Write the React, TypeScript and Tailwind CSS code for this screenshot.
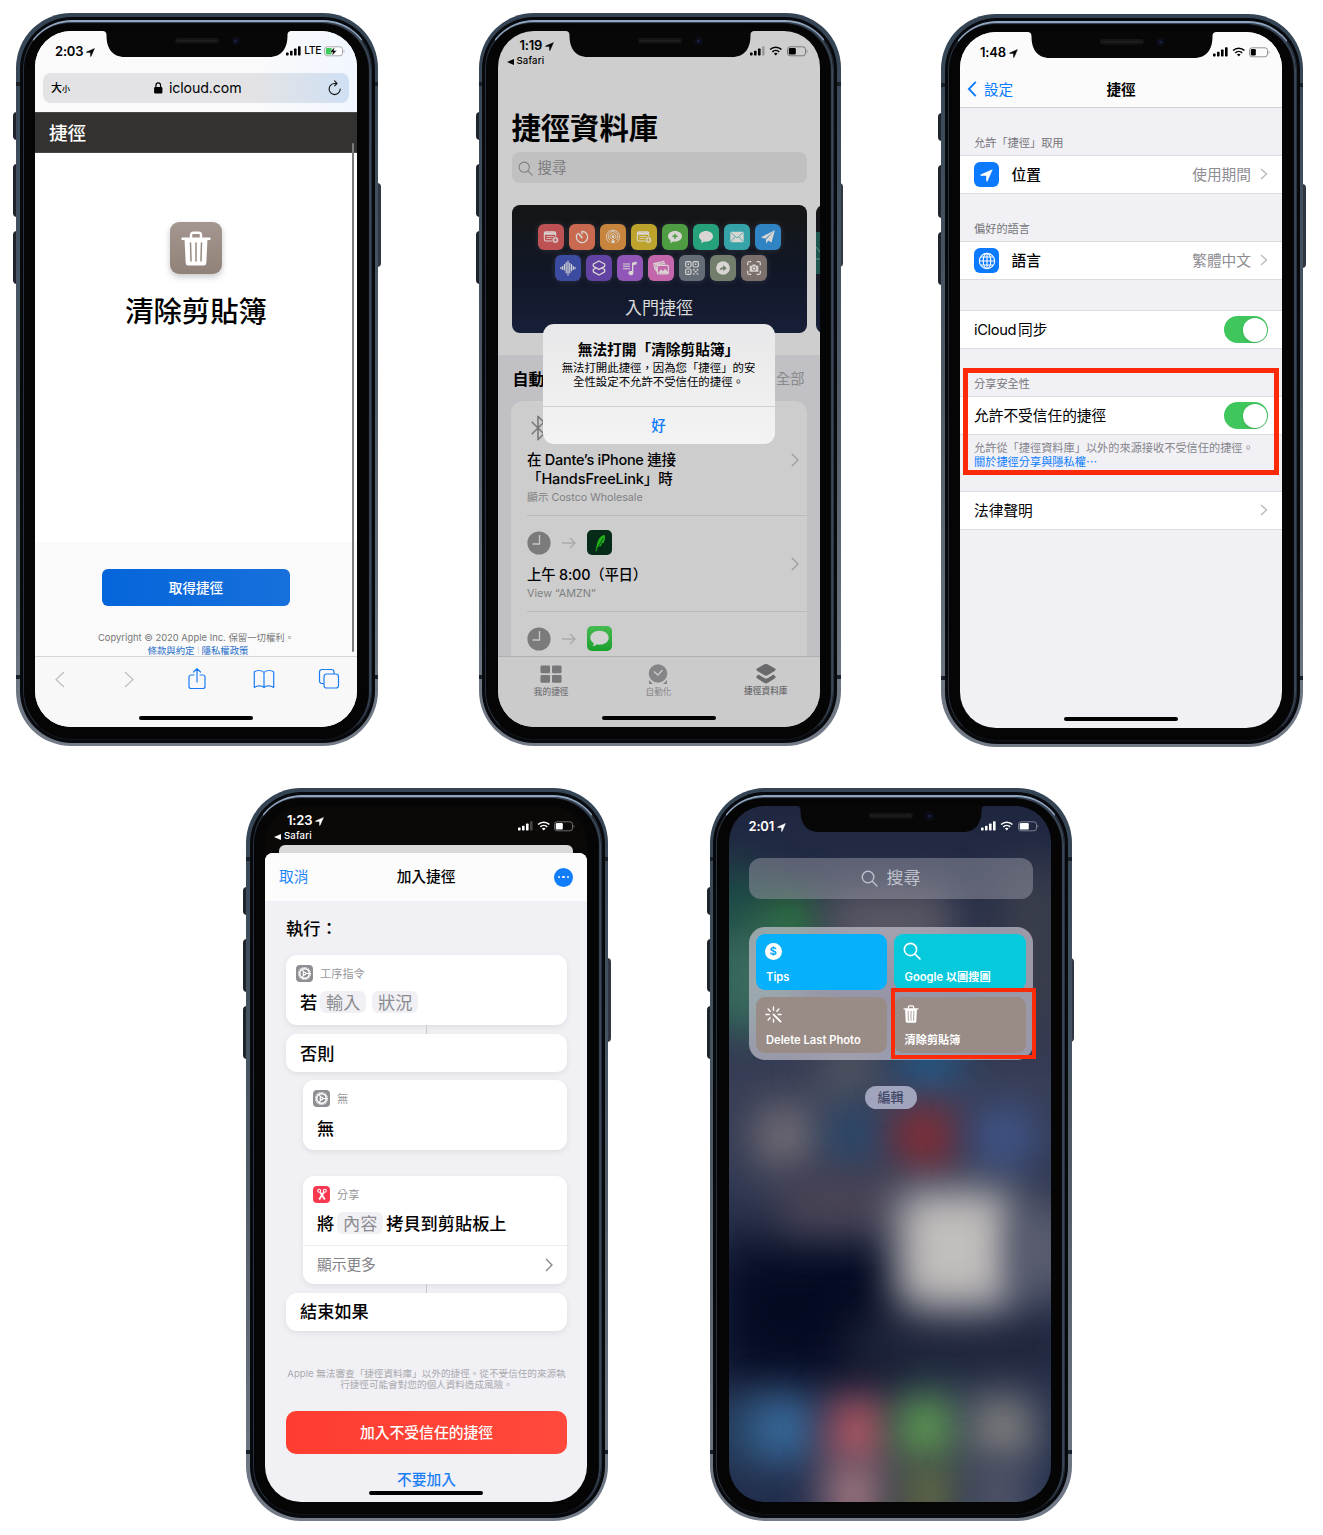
import React from 'react';
import { LuBluetooth } from 'react-icons/lu';

type IconProps = { className?: string };

const LocationArrow = ({ className = '' }: IconProps) => (
  <svg viewBox="0 0 24 24" className={className} fill="currentColor" stroke="currentColor" strokeWidth="1.200" strokeLinejoin="round">
    <path d="M22.500 1.500 1.500 10.700c-.6.3-.5 1 .2 1.100H12l.2 10.400c0 .7.800.9 1.100.2z" />
  </svg>
);

const Signal = ({ dim = false }: { dim?: boolean }) => (
  <svg viewBox="0 0 15 10" className="h-[10px] w-[15px]" fill="currentColor">
    <rect x="0" y="6.500" width="2.600" height="3" rx=".7" />
    <rect x="4" y="4.800" width="2.600" height="4.700" rx=".7" />
    <rect x="8" y="2.600" width="2.600" height="6.900" rx=".7" />
    <rect x="12" y="0.300" width="2.600" height="9.200" rx=".7" opacity={dim ? 0.25 : 1} />
  </svg>
);

const Wifi = () => (
  <svg viewBox="0 0 16 12" className="h-[10px] w-[13.500px]" fill="none" stroke="currentColor" strokeWidth="2">
    <path d="M1.200 4.200a9.800 9.800 0 0 1 13.600 0" />
    <path d="M3.900 7a6 6 0 0 1 8.200 0" />
    <path d="M5.800 9.100a3.200 3.200 0 0 1 4.400 0L8 11.300z" fill="currentColor" stroke="none" />
  </svg>
);

const Battery = ({ level }: { level: number }) => (
  <svg viewBox="0 0 21 11" className="h-[11px] w-[21px]">
    <rect x=".5" y=".8" width="18" height="9" rx="2.600" fill="none" stroke="currentColor" strokeOpacity=".4" />
    <path d="M19.600 3.700c1.200.4 1.200 2.800 0 3.200z" fill="currentColor" opacity=".4" />
    <rect x="1.800" y="2.100" width={level} height="6.400" rx="1.200" fill="currentColor" />
  </svg>
);

const ChargingBattery = () => (
  <svg viewBox="0 0 21 11" className="h-[11px] w-[21px]">
    <rect x=".5" y=".8" width="18" height="9" rx="2.600" fill="#fff" stroke="#a9a9ab" />
    <path d="M19.600 3.700c1.200.4 1.200 2.800 0 3.200z" fill="#a9a9ab" />
    <rect x="1.800" y="2.100" width="6" height="6.400" rx="1" fill="#3ccb5a" />
    <path d="M10.800.8 5.700 6.200h3.100l-1 3.900 5.100-5.500H9.800z" fill="#000" stroke="#fff" strokeWidth=".5" />
  </svg>
);

const Trash = ({ className = '' }: IconProps) => (
  <svg viewBox="0 0 30 35" className={className}>
    <path d="M10 7V4a2.300 2.300 0 0 1 2.300-2.300h5.400A2.300 2.300 0 0 1 20 4v3" fill="none" stroke="#fff" strokeWidth="2.400" />
    <path d="M1 6.500h28c.8 0 .8 2.400 0 2.400H1c-.8 0-.8-2.400 0-2.400z" fill="#fff" />
    <path d="M3.500 8h23l-1.200 24a2.600 2.600 0 0 1-2.600 2.500H7.300A2.600 2.600 0 0 1 4.700 32z" fill="#fff" />
    <path d="m9.500 12 .5 18M15 12v18M20.500 12l-.5 18" stroke="#96897f" strokeWidth="1.500" strokeLinecap="round" />
  </svg>
);

const SearchIcon = ({ className = '', w = 1.6 }: IconProps & { w?: number }) => (
  <svg viewBox="0 0 20 20" className={className} fill="none" stroke="currentColor" strokeWidth={w} strokeLinecap="round">
    <circle cx="8.300" cy="8.300" r="6.800" />
    <path d="m13.300 13.300 5.500 5.500" />
  </svg>
);

const Gear = () => (
  <div className="flex size-[17px] items-center justify-center rounded-[4px] bg-[#8e8e93]">
    <svg viewBox="0 0 24 24" className="size-[15px]" fill="none" stroke="#fff">
      <circle cx="12" cy="12" r="9.500" strokeWidth="1.800" strokeDasharray="1.500 .98" />
      <circle cx="12" cy="12" r="7.600" strokeWidth="2.400" />
      <circle cx="12" cy="12" r="2.200" strokeWidth="2" />
      <path d="M14 12h6M11 10.300 8 5M11 13.700 8 19" strokeWidth="1.800" />
    </svg>
  </div>
);

type StatusProps = { time: string; back?: boolean; dim?: boolean; level?: number; charging?: boolean; className?: string };

const StatusBar = ({ time, back, dim, level = 7, charging, className = '' }: StatusProps) => (
  <div className={`flex h-[42px] shrink-0 justify-between pr-[12px] ${className}`}>
    <div className={back ? 'flex w-20 flex-col pt-[7px]' : 'flex w-20 flex-col pt-[13px]'}>
      <div className={`flex h-[16px] items-center gap-[3px] text-[13px] font-semibold tracking-[-0.200px] ${back ? 'pl-[22px]' : 'pl-[20px]'}`}>
        {time}
        <LocationArrow className="size-[9px]" />
      </div>
      {back && (
        <div className="flex h-[15px] items-center gap-[3px] pl-[9px] text-[9.500px] font-medium tracking-[0.200px]">
          <svg viewBox="0 0 7 6" className="h-[6px] w-[7px]" fill="currentColor"><path d="M7 0v6L0 3z" /></svg>
          Safari
        </div>
      )}
    </div>
    <div className="flex h-[40px] items-center gap-[4px]">
      <Signal dim={dim} />
      {charging ? <span className="-mx-[1px] text-[10.500px] font-medium tracking-[-0.500px]">LTE</span> : <Wifi />}
      {charging ? <ChargingBattery /> : <Battery level={level} />}
    </div>
  </div>
);

const Notch = () => (
  <svg viewBox="0 0 190 28" className="absolute top-[-1px] left-[67px] h-[28px] w-[190px]">
    <path d="M0 0h190v1c-3 0-4.500 1-4.500 4.500C185.500 18 180 27 167 27H23C10 27 4.500 18 4.500 5.500 4.500 2 3 1 0 1z" fill="#080707" />
    <rect x="73" y="8" width="44" height="5.500" rx="2.700" fill="#161515" />
    <path d="M75 10.700h40" stroke="#282726" strokeWidth="1.500" strokeDasharray="1 1" />
    <circle cx="133.500" cy="11" r="4.500" fill="#0b0c16" />
    <circle cx="133.500" cy="11" r="1.600" fill="#182046" />
  </svg>
);

const HomeBar = () => <div className="absolute bottom-[7px] left-[104px] h-[4.500px] w-[114px] rounded-full bg-black" />;

type PhoneProps = { children: React.ReactNode; screen: string; notch?: boolean; home?: boolean };

const Phone = ({ children, screen, notch = true, home = true }: PhoneProps) => (
  <div className="relative h-[733px] w-[362px] shrink-0">
    <div className="absolute top-[99px] left-[-3px] h-[28px] w-[4px] rounded-l-sm bg-[#1d242c]" />
    <div className="absolute top-[151px] left-[-3px] h-[53px] w-[4px] rounded-l-sm bg-[#1d242c]" />
    <div className="absolute top-[218px] left-[-3px] h-[53px] w-[4px] rounded-l-sm bg-[#1d242c]" />
    <div className="absolute top-[170px] right-[-2.500px] h-[84px] w-[4px] rounded-r-sm bg-[#303743]" />
    <div className="relative h-full rounded-[55px] bg-linear-to-b from-[#344454] via-[#4e5a66] to-[#737b88] p-[3.500px]">
      <div className="absolute top-[69px] left-0 h-[4px] w-full bg-[#1a2028]" />
      <div className="absolute bottom-[67px] left-0 h-[4px] w-full bg-[#1a2028]" />
      <div className="relative h-full rounded-[52px] bg-[#07090d] p-[3px]">
        <div className="h-full rounded-[49px] border-x border-t-2 border-b border-x-[#27313d] border-t-[#8fa5c0] border-b-[#11151b] bg-[#050505] pt-[9.500px] pr-[13.500px] pl-[11.500px] shadow-[inset_-2px_1px_1px_#3c4859]">
          <div className={`relative flex h-[696px] w-[322px] flex-col overflow-hidden rounded-[36px] ${screen}`}>
            {children}
            {notch && <Notch />}
            {home && <HomeBar />}
          </div>
        </div>
      </div>
    </div>
  </div>
);

const SafariPhone = () => (
  <Phone screen="bg-white">
    <div className="flex h-[81px] shrink-0 flex-col bg-linear-to-r from-[#fafafb] from-70% to-[#f1f6ff]">
      <StatusBar time="2:03" charging />
      <div className="mx-[8px] flex h-[30px] items-center rounded-[8px] bg-linear-to-r from-[#e3e3e6] from-70% to-[#cfe0f3] pr-[8px] pl-[8px]">
        <span className="w-[78px] text-[11px] font-medium">大<span className="text-[8px]">小</span></span>
        <div className="flex flex-1 items-center justify-center gap-[6px] pl-[4px] text-[14.200px] tracking-[-0.100px]">
          <svg viewBox="0 0 9 13" className="h-[12px] w-[8.500px]"><rect y="5.500" width="9" height="7" rx="1.200" /><path d="M2 6V3.500a2.500 2.500 0 0 1 5 0V6" fill="none" stroke="#000" strokeWidth="1.300" /></svg>
          icloud.com
        </div>
        <div className="flex w-[78px] justify-end">
          <svg viewBox="0 0 14 17" className="h-[16px] w-[13.500px]" fill="none" stroke="#111" strokeWidth="1.200" strokeLinecap="round" strokeLinejoin="round">
            <path d="M12.800 9.500A5.900 5.900 0 1 1 7 3.700h2M6.800 1l2.600 2.700L6.800 6.300" />
          </svg>
        </div>
      </div>
    </div>
    <div className="flex h-[41px] shrink-0 items-center border-y border-[#484848] bg-[#333231] pt-[2px] pl-[14px] text-[18.600px] font-medium text-white">捷徑</div>
    <div className="flex h-[389px] shrink-0 flex-col items-center pt-[69px]">
      <div className="flex size-[52px] items-center justify-center rounded-[9px] bg-linear-to-b from-[#a4978f] to-[#908279] shadow-[0_3px_6px_rgba(0,0,0,0.220)]">
        <Trash className="h-[35px] w-[30px]" />
      </div>
      <h1 className="mt-[18px] text-[28.300px] leading-[40px] font-medium text-black">清除剪貼簿</h1>
    </div>
    <div className="flex h-[114px] shrink-0 flex-col items-center bg-[#fafafa] pt-[27px]">
      <button className="flex h-[37px] w-[188px] items-center justify-center rounded-[6px] bg-linear-to-r from-[#0465db] to-[#1770db] pt-[2px] text-[13.600px] font-medium text-white">取得捷徑</button>
      <div className="mt-[26px] h-[12px] text-[9.400px] leading-[12px] whitespace-nowrap text-[#777]">Copyright © 2020 Apple Inc. 保留一切權利。</div>
      <div className="mr-[-4px] flex h-[12px] gap-[3px] text-[9.400px] leading-[13px] whitespace-nowrap text-[#1f6fc8]">
        <span>條款與約定</span><span className="my-[2px] w-px bg-[#ddd]" /><span>隱私權政策</span>
      </div>
    </div>
    <div className="flex flex-1 justify-between border-t border-[#d6d6d8] bg-[#f8f8f8] px-[17px] pt-[10px] text-[#1a7df5]">
      <svg viewBox="0 0 14 24" className="h-[24px] w-[14px]" fill="none" stroke="#bfbfc1" strokeWidth="1.200"><path d="m12 5-8 7.500 8 7.500" /></svg>
      <svg viewBox="0 0 14 24" className="ml-[18px] h-[24px] w-[14px]" fill="none" stroke="#bfbfc1" strokeWidth="1.200"><path d="m2 5 8 7.500-8 7.500" /></svg>
      <svg viewBox="0 0 20 24" className="ml-[12px] h-[24px] w-[20px]" fill="none" stroke="currentColor" strokeWidth="1.200" strokeLinecap="round" strokeLinejoin="round"><path d="M7 8H4a2 2 0 0 0-2 2v9.500a2 2 0 0 0 2 2h12a2 2 0 0 0 2-2V10a2 2 0 0 0-2-2h-3M10 15V2M6.500 5 10 1.600 13.500 5" /></svg>
      <svg viewBox="0 0 22 24" className="ml-[7px] h-[24px] w-[22px]" fill="none" stroke="currentColor" strokeWidth="1.200" strokeLinejoin="round"><path d="M11 5.500C9 3 4 2.800 1.300 5v15.500c3-2.200 7.500-2 9.700 0 2.200-2 6.700-2.200 9.700 0V5C18 2.800 13 3 11 5.500zm0 0v15" /></svg>
      <svg viewBox="0 0 22 24" className="ml-[5px] h-[24px] w-[22px]" fill="none" stroke="currentColor" strokeWidth="1.200"><rect x="6" y="7" width="14.500" height="14" rx="2.500" /><path d="M6 16.500H4A2.500 2.500 0 0 1 1.500 14V5A2.500 2.500 0 0 1 4 2.500h9.500A2.500 2.500 0 0 1 16 5v2" /></svg>
    </div>
    <div className="absolute top-[112px] right-[3px] h-[509px] w-[2px] rounded-full bg-[#7b7b7b]" />
  </Phone>
);

// Calendar page with a round "add" badge; the badge punches through in the tile's own colour.
const calendar = (tile: string) => (
  <g>
    <rect x="2" y="4" width="17" height="14" rx="2.200" fill="none" stroke="currentColor" strokeWidth="1.600" />
    <path d="M2 5h17v3.500H2zM5 10.500h11v1.300H5zM5 13.500h8v1.300H5z" fill="currentColor" />
    <circle cx="18.500" cy="16.500" r="5" fill="currentColor" stroke={tile} strokeWidth="1.200" />
    <path d="M18.500 13.800v5.400M15.800 16.500h5.400" stroke={tile} strokeWidth="1.500" />
  </g>
);

const bubble = 'M12 3c6 0 10.500 3.500 10.500 8S18 19 12 19c-1 0-2-.1-2.900-.3-1.300 1.200-3 2.100-5.100 2.100 1-1 1.500-2.200 1.400-3.600C3 15.800 1.500 13.600 1.500 11c0-4.500 4.500-8 10.500-8z';

const apps: { bg: string; art: React.ReactNode }[] = [
  { bg: 'bg-[#bd5153]', art: calendar('#bd5153') },
  { bg: 'bg-[#c9694f]', art: <g fill="none" stroke="currentColor" strokeWidth="2" strokeLinecap="round"><path d="M12 3.500a8.500 8.500 0 1 1-7 3.700M12 3.500V7" /><path d="m12 13-4.500-6" strokeWidth="2.400" /></g> },
  { bg: 'bg-[#c6843d]', art: <g fill="none" stroke="currentColor" strokeWidth="1.300"><path d="M6.500 20a10 10 0 1 1 11 0M8 17a7.200 7.200 0 1 1 8 0M9.500 14.800a4.300 4.300 0 1 1 5 0" /><circle cx="12" cy="11.500" r="2" fill="currentColor" stroke="none" /><path d="m12 13-3 8h6z" fill="currentColor" stroke="none" /></g> },
  { bg: 'bg-[#bda32c]', art: calendar('#bda32c') },
  { bg: 'bg-[#4e9d43]', art: <g><path d={bubble} fill="currentColor" /><path d="M12 7v8M8 11h8" stroke="#4e9d43" strokeWidth="2.200" /></g> },
  { bg: 'bg-[#26a17c]', art: <path d={bubble} fill="currentColor" /> },
  { bg: 'bg-[#36a3a9]', art: <g><rect x="2" y="4" width="20" height="16" rx="1.500" fill="currentColor" /><path d="m2.500 5 9.500 8.500L21.500 5M2.500 19.500l7-8M21.500 19.500l-7-8" fill="none" stroke="#36a3a9" strokeWidth="1.200" /></g> },
  { bg: 'bg-[#3084c4]', art: <path d="M22.500 1.500 1.500 12.500l6.500 2.300zM22.500 1.500 9 15.800V22l3.300-4.600 5 3z" fill="currentColor" /> },
  { bg: 'bg-[#3a4ba0]', art: <path d="M1.500 11v2M4 10v4M6.600 7v8M9.300 4v15M12 1.500v21M14.700 5v14M17.400 7v9M20 10v4M22.500 11v2" stroke="currentColor" strokeWidth="1.700" strokeLinecap="round" /> },
  { bg: 'bg-[#6242a2]', art: <path d="m12 1.500 8.500 4.500v3.500L12 14 3.500 9.500V6zM7.500 12l-4 2.300v3.400l8.500 4.800 8.500-4.800v-3.400l-4-2.300" fill="none" stroke="currentColor" strokeWidth="2" strokeLinejoin="round" /> },
  { bg: 'bg-[#9156b8]', art: <g><path d="M1.500 6H12M1.500 9.500H12M1.500 13H12" stroke="currentColor" strokeWidth="1.600" /><path d="M15 16.500V4l7-1.800v4.300L17 8v10.500a3.800 3.300 0 1 1-2-2z" fill="currentColor" /></g> },
  { bg: 'bg-[#c366ab]', art: <g fill="none" stroke="currentColor" strokeWidth="1.700"><path d="M3.500 15.500 1 5.500l15-3.200.7 2.200M5.500 17.500 4 6.500l14-1" /><rect x="6.500" y="8" width="16.500" height="13" rx="1.500" /><path d="m7.500 20 4.500-6 3 3 3-4 4.500 5v2.500z" fill="currentColor" stroke="none" /></g> },
  { bg: 'bg-[#646c76]', art: <g fill="none" stroke="currentColor" strokeWidth="1.700"><rect x="2.500" y="2.500" width="8" height="8" rx="1.800" /><rect x="13.500" y="2.500" width="8" height="8" rx="1.800" /><rect x="2.500" y="13.500" width="8" height="8" rx="1.800" /><path d="M5.500 6.500h2M16.500 6.500h2M5.500 17.500h2M13.500 14.500h2.500M19 14.500h2.500M16 17.500h3M13.500 20.800h2.500M19 20.800h2.500" strokeWidth="2.200" /></g> },
  { bg: 'bg-[#727d6c]', art: <g><circle cx="12" cy="12" r="10.300" fill="currentColor" /><path d="M7 16c0-4 2-5.300 5.300-5.300V7.500l5.200 4.700-5.200 4.700v-3.200C9.700 13.700 8.300 14 7 16z" fill="#727d6c" /></g> },
  { bg: 'bg-[#7b706c]', art: <g fill="none" stroke="currentColor" strokeWidth="1.900"><path d="M2.500 8V5A2.500 2.500 0 0 1 5 2.500h3M16 2.500h3A2.500 2.500 0 0 1 21.500 5v3M21.500 16v3a2.500 2.500 0 0 1-2.500 2.500h-3M8 21.500H5A2.500 2.500 0 0 1 2.500 19v-3" /><path d="M5.500 8.500H9l1-1.700h4l1 1.700h3.500v9h-13z" fill="currentColor" stroke="none" /><circle cx="12" cy="12.800" r="2.700" stroke="#7b706c" strokeWidth="1.300" /></g> },
];

const AppIcon = ({ bg, art }: { bg: string; art: React.ReactNode }) => (
  <div className={`flex size-[26px] items-center justify-center rounded-[6px] text-[#d9d5d2] shadow-[0_0_6px_rgba(255,255,255,0.120)] ${bg}`}>
    <svg viewBox="0 0 24 24" className="size-[16px]">{art}</svg>
  </div>
);

const ClockArrow = () => (
  <>
    <svg viewBox="0 0 24 24" className="size-[24px]"><circle cx="12" cy="12" r="11.600" fill="#7b7b7c" /><path d="M12.500 4v9H5.500" fill="none" stroke="#c6c6c6" strokeWidth="1.400" /></svg>
    <svg viewBox="0 0 14 12" className="h-[12px] w-[14px]" fill="none" stroke="#a9a9a9" strokeWidth="1.300"><path d="M0 6h13M8 1l5 5-5 5" /></svg>
  </>
);

const ListChevron = ({ className = '' }: IconProps) => (
  <svg viewBox="0 0 8 14" className={`h-[14px] w-[8px] shrink-0 ${className}`} fill="none" stroke="#98989a" strokeWidth="1.200"><path d="m.8.800 6.200 6.200-6.200 6.200" /></svg>
);

const LibraryPhone = () => (
  <Phone screen="bg-[#cecece]">
    <StatusBar time="1:19" back dim level={7} />
    <h1 className="mt-[35px] ml-[14px] h-[40px] text-[29.300px] leading-[42px] font-bold whitespace-nowrap">捷徑資料庫</h1>
    <div className="mt-[4px] ml-[14px] flex h-[31px] w-[295px] shrink-0 items-center gap-[5px] rounded-[8px] bg-[#c0c0c1] pt-px pl-[6px] text-[14.500px] text-[#7d7d80]">
      <SearchIcon className="size-[15px]" w={1.400} />搜尋
    </div>
    <div className="mt-[22px] ml-[14px] flex shrink-0 gap-[9px]">
      <div className="flex h-[128px] w-[295px] shrink-0 flex-col items-center rounded-[8px] bg-linear-to-b from-[#151515] via-[#111726] to-[#171e38] pt-[19px]">
        <div className="flex gap-[5px] pl-[1px]">{apps.slice(0, 8).map((a, i) => <AppIcon key={i} {...a} />)}</div>
        <div className="mt-[5px] flex gap-[5px] pl-[4px]">{apps.slice(8).map((a, i) => <AppIcon key={i} {...a} />)}</div>
        <div className="mt-[15px] text-[17px] leading-[24px] text-[#dadada]">入門捷徑</div>
      </div>
      <div className="h-[128px] w-[40px] shrink-0 rounded-[8px] bg-linear-to-b from-[#151515] to-[#171e38] pt-[27px]">
        <div className="h-[42px] bg-[#1c564f]">
          <svg viewBox="0 0 10 42" className="h-[42px] w-[10px]" fill="none" stroke="#6f8f8a" strokeWidth="1"><path d="M0 15l4 5a4 4 0 0 1 0 7H0" /></svg>
        </div>
      </div>
    </div>
    <div className="mt-[22px] flex min-h-0 flex-1 flex-col bg-[#c0c0c5]">
      <div className="flex h-[46px] shrink-0 items-center justify-between pt-px pr-[15px] pl-[15px] text-[16px] font-bold">
        自動<span className="text-[14.300px] font-normal text-[#89898c]">全部</span>
      </div>
      <div className="mr-[12.500px] ml-[13.500px] h-[255px] shrink-0 overflow-hidden rounded-t-[12px] bg-[#cdcdcd] pl-[16px]">
        <div className="flex h-[115px] flex-col border-b border-[#bababb] pt-[13px]">
          <LuBluetooth className="ml-[-3px] size-[28px] stroke-[1.300] text-[#77777a]" />
          <div className="flex items-center justify-between pt-[8px] pr-[8px]">
            <div className="text-[14.500px] leading-[19px] font-medium whitespace-nowrap">
              <div className="tracking-[-0.280px]">在 Dante’s iPhone 連接</div>
              <div className="tracking-[-0.100px]">「HandsFreeLink」時</div>
            </div>
            <ListChevron className="mb-[19px]" />
          </div>
          <div className="pt-px text-[10.700px] leading-[17px] text-[#7f7f82]">顯示 Costco Wholesale</div>
        </div>
        <div className="flex h-[96px] border-b border-[#bababb] pt-[14px] pr-[8px]">
          <div className="flex-1">
            <div className="flex h-[25px] items-center gap-[11px]">
              <ClockArrow />
              <div className="flex size-[25px] items-center justify-center rounded-[5px] bg-[#062b19]">
                <svg viewBox="0 0 24 24" className="size-[20px]"><path d="M6.500 22 8.500 13c1.500-6 4.500-10 9-10.500 1 3 .5 6-1 9l-2.500 1-.8 3-3 1-2.500 5.500z" fill="#1fb518" /><path d="m8 20 8-14" stroke="#062b19" strokeWidth=".9" /></svg>
              </div>
            </div>
            <div className="mt-[10px] text-[14.400px] leading-[19px] font-medium tracking-[-0.200px]">上午 8:00（平日）</div>
            <div className="mt-[1px] text-[10.800px] leading-[17px] text-[#7f7f82]">View “AMZN”</div>
          </div>
          <ListChevron className="mt-[27px]" />
        </div>
        <div className="flex h-[53px] items-center gap-[11px]">
          <ClockArrow />
          <div className="flex size-[25px] items-center justify-center rounded-[5px] bg-linear-to-b from-[#45ba50] to-[#16a02b] text-[#d2d2d2]">
            <svg viewBox="0 0 24 24" className="size-[21px]"><path d={bubble} fill="currentColor" /></svg>
          </div>
        </div>
      </div>
    </div>
    <div className="flex h-[71px] shrink-0 justify-around border-t border-[#b0b0b2] bg-[#cbcbcb] pt-[6px] text-[8.700px] text-[#77777a]">
      <div className="flex w-[60px] flex-col items-center">
        <svg viewBox="0 0 22 22" className="size-[22px]" fill="currentColor"><rect x=".5" y="2.500" width="9.500" height="7.700" rx="1.200" /><rect x="12" y="2.500" width="9.500" height="7.700" rx="1.200" /><rect x=".5" y="12" width="9.500" height="7.700" rx="1.200" /><rect x="12" y="12" width="9.500" height="7.700" rx="1.200" /></svg>
        <span className="mt-[1px] font-medium">我的捷徑</span>
      </div>
      <div className="flex w-[60px] flex-col items-center text-[#858588]">
        <svg viewBox="0 0 22 22" className="size-[22px]"><circle cx="11" cy="10.500" r="9.300" fill="currentColor" /><path d="m7 8.500 4 3.500 4.500-5" fill="none" stroke="#cbcbcb" strokeWidth="1.300" /><path d="m2 17 4 4H2zM20 17l-4 4h4z" fill="currentColor" /></svg>
        <span className="mt-[1px]">自動化</span>
      </div>
      <div className="flex w-[60px] flex-col items-center text-[#6a6a6d]">
        <svg viewBox="0 0 22 22" className="size-[22px]" fill="currentColor"><path d="M9.500 1.300q1.500-.8 3 0L20 5.500q1.300 1 0 2.200l-7.500 4.600q-1.500.8-3 0L2 7.700q-1.300-1.200 0-2.200zM3.500 11.500 9 15q2 1 4 0l5.500-3.500L20 13q1.300 1.200 0 2.300l-7.500 4.800q-1.500.8-3 0L2 15.300q-1.300-1.100 0-2.300z" /></svg>
        <span className="font-medium whitespace-nowrap">捷徑資料庫</span>
      </div>
    </div>
    <div className="absolute top-[293px] left-[45px] flex h-[120px] w-[232px] flex-col rounded-[11px] bg-linear-to-b from-[#e8e8ea] to-[#f3f3f3]">
      <div className="flex flex-1 flex-col items-center pt-[16px]">
        <div className="text-[14.700px] leading-[20px] font-bold whitespace-nowrap">無法打開「清除剪貼簿」</div>
        <div className="w-[220px] pt-[2px] text-center text-[11.400px] leading-[13.500px] whitespace-nowrap">無法打開此捷徑，因為您「捷徑」的安<br />全性設定不允許不受信任的捷徑。</div>
      </div>
      <button className="h-[38px] border-t border-[#cfcfd1] text-[14.500px] font-medium text-[#0a7bff]">好</button>
    </div>
  </Phone>
);

const Row = ({ children, className = '' }: { children: React.ReactNode; className?: string }) => (
  <div className={`flex h-[39px] shrink-0 items-center border-y border-[#dcdce0] bg-white pr-[14px] pl-[14px] text-[14.700px] ${className}`}>{children}</div>
);

const Toggle = () => (
  <div className="ml-auto flex h-[27px] w-[44px] justify-end rounded-full bg-[#3fc65d] p-[1.500px]">
    <div className="size-[24px] rounded-full bg-white shadow-sm" />
  </div>
);

const Chevron = () => (
  <svg viewBox="0 0 8 12" className="mb-px ml-[9px] h-[12px] w-[8px]" fill="none" stroke="#bdbdc1" strokeWidth="1.500"><path d="m1 1 5.500 5L1 11" /></svg>
);

const SettingsPhone = () => (
  <Phone screen="bg-[#f1f0f5]">
    <div className="flex h-[76px] shrink-0 flex-col border-b border-[#d3d3d6] bg-[#fbfbfc]">
      <StatusBar time="1:48" level={5} />
      <div className="flex h-[31px] items-center text-[14.600px]">
        <div className="flex w-[108px] items-center text-[#0a7bff]">
          <svg viewBox="0 0 10 17" className="mr-[7px] mb-px ml-[7px] h-[16px] w-[10px]" fill="none" stroke="currentColor" strokeWidth="2"><path d="M9 1 1.700 8.500 9 16" /></svg>
          <span className="pt-[2px]">設定</span>
        </div>
        <div className="flex-1 pt-[2px] text-center font-bold">捷徑</div>
        <div className="w-[108px]" />
      </div>
    </div>
    <div className="h-[47px] shrink-0 pt-[27px] pl-[14px] text-[11.200px] leading-[17px] text-[#75757a]">允許「捷徑」取用</div>
    <Row>
      <div className="mr-[12.500px] flex size-[25px] items-center justify-center rounded-[6px] bg-[#0b7aff] text-white"><LocationArrow className="mt-[1px] mr-[1px] size-[13px]" /></div>
      <span className="pt-[2px] font-medium">位置</span><span className="ml-auto pt-[2px] text-[#8d8d92]">使用期間</span><Chevron />
    </Row>
    <div className="h-[47px] shrink-0 pt-[27px] pl-[14px] text-[11.200px] leading-[17px] text-[#75757a]">偏好的語言</div>
    <Row>
      <div className="mr-[12.500px] flex size-[25px] items-center justify-center rounded-[6px] bg-[#0b7aff]">
        <svg viewBox="0 0 20 20" className="size-[18px]" fill="none" stroke="#fff" strokeWidth="1.200"><circle cx="10" cy="10" r="8.500" /><ellipse cx="10" cy="10" rx="4.200" ry="8.500" /><path d="M10 1.500v17M1.500 10h17M3.200 5.500h13.600M3.200 14.500h13.600" /></svg>
      </div>
      <span className="pt-[2px] font-medium">語言</span><span className="ml-auto pt-[2px] text-[#8d8d92]">繁體中文</span><Chevron />
    </Row>
    <Row className="mt-[30px]"><span className="pt-[2px] tracking-[-0.350px]">iCloud <span className="-ml-[2px] tracking-normal">同步</span></span><Toggle /></Row>
    <div className="h-[47px] shrink-0 pt-[27px] pl-[14px] text-[11.200px] leading-[17px] text-[#75757a]">分享安全性</div>
    <Row><span className="pt-px">允許不受信任的捷徑</span><Toggle /></Row>
    <div className="h-[56px] shrink-0 pt-[6px] pl-[14px] text-[11.200px] leading-[14px] whitespace-nowrap text-[#85858a]">
      允許從「捷徑資料庫」以外的來源接收不受信任的捷徑。
      <div className="text-[#0a7bff]">關於捷徑分享與隱私權⋯</div>
    </div>
    <Row><span className="pt-px">法律聲明</span><span className="ml-auto" /><Chevron /></Row>
    <div className="absolute top-[336px] left-[3px] h-[107px] w-[316px] border-[5.500px] border-[#fb2b09]" />
  </Phone>
);

const Card = ({ children, className = '' }: { children: React.ReactNode; className?: string }) => (
  <div className={`shrink-0 rounded-[11px] bg-white shadow-[0_2px_6px_rgba(0,0,0,0.080)] ${className}`}>{children}</div>
);

const Pill = ({ children }: { children: React.ReactNode }) => (
  <span className="flex h-[22px] w-[46px] items-center justify-center rounded-[6px] bg-[#f1f1f5] pt-[2px] font-normal text-[#8c8c91]">{children}</span>
);

const AddPhone = () => (
  <Phone screen="bg-[#0a0908]" notch={false}>
    <div className="flex h-[39px] shrink-0 text-white">
      <StatusBar time="1:23" back dim level={7} className="w-full" />
    </div>
    <div className="mx-[14px] h-[8px] shrink-0 rounded-t-[6px] bg-[#dadada]" />
    <div className="flex min-h-0 flex-1 flex-col rounded-t-[8px] bg-[#f1f0f5] text-[17.200px] font-medium">
      <div className="flex h-[48px] shrink-0 items-center rounded-t-[8px] bg-[#fcfcfd] px-[14px] text-[14.700px]">
        <div className="flex-1 pt-px font-normal text-[#1c86f8]">取消</div>
        <div className="pt-px">加入捷徑</div>
        <div className="flex flex-1 justify-end">
          <div className="flex size-[19px] items-center justify-center gap-[2px] rounded-full bg-[#127dfa]">
            <i className="size-[2.500px] rounded-full bg-white" /><i className="size-[2.500px] rounded-full bg-white" /><i className="size-[2.500px] rounded-full bg-white" />
          </div>
        </div>
      </div>
      <div className="h-[54px] shrink-0 pt-[16px] pl-[21px] leading-[24px]">執行：</div>
      <div className="flex flex-col pr-[20px] pl-[21px]">
        <Card className="h-[70px] pt-[10px] pl-[10px]">
          <div className="flex h-[17px] items-center gap-[7px] text-[11.200px] font-normal text-[#97979b]"><Gear /><span className="pt-px">工序指令</span></div>
          <div className="mt-[9px] flex h-[22px] items-center pl-[4px]"><span className="pt-[2px]">若</span><span className="w-[3px]" /><Pill>輸入</Pill><span className="w-[6px]" /><Pill>狀況</Pill></div>
        </Card>
        <div className="ml-[140px] h-[9px] w-px bg-[#c9c9cd]" />
        <Card className="flex h-[38px] items-center pt-px pl-[14px]">否則</Card>
        <Card className="mt-[8px] ml-[17px] h-[70px] pt-[10px] pl-[10px]">
          <div className="flex h-[17px] items-center gap-[7px] text-[11.200px] font-normal text-[#97979b]"><Gear /><span className="pt-px">無</span></div>
          <div className="mt-[10px] flex h-[22px] items-center pt-[2px] pl-[4px]">無</div>
        </Card>
        <Card className="mt-[26px] ml-[17px] h-[108px] pt-[10px]">
          <div className="flex h-[17px] items-center gap-[7px] pl-[10px] text-[11.200px] font-normal text-[#97979b]">
            <div className="flex size-[17px] items-center justify-center rounded-[4px] bg-[#f83850]">
              <svg viewBox="0 0 12 14" className="h-[13px] w-[12px]" fill="none" stroke="#fff"><circle cx="3" cy="3" r="1.600" strokeWidth="1.200" /><circle cx="9" cy="3" r="1.600" strokeWidth="1.200" /><path d="m4 4.500 5 8M8 4.500l-5 8" strokeWidth="2" /></svg>
            </div>
            <span className="pt-[2px]">分享</span>
          </div>
          <div className="mt-[9px] flex h-[22px] items-center gap-[3px] pl-[14px]"><span className="pt-[2px]">將</span><Pill>內容</Pill><span className="pt-[2px]">拷貝到剪貼板上</span></div>
          <div className="mt-[11px] flex h-[38px] items-center justify-between border-t border-[#ececef] pr-[14px] pl-[14px] text-[14.700px] font-normal text-[#828287]">
            <span className="pt-[2px]">顯示更多</span>
            <svg viewBox="0 0 8 14" className="h-[14px] w-[8px]" fill="none" stroke="#828287" strokeWidth="1.300"><path d="m1 1 6 6-6 6" /></svg>
          </div>
        </Card>
        <div className="ml-[140px] h-[9px] w-px bg-[#c9c9cd]" />
        <Card className="flex h-[38px] items-center pl-[14px]">結束如果</Card>
        <p className="mt-[37px] text-center text-[9.600px] leading-[11px] font-normal whitespace-nowrap text-[#a9a9ae]">Apple 無法審查「捷徑資料庫」以外的捷徑。從不受信任的來源執<br />行捷徑可能會對您的個人資料造成風險。</p>
        <button className="mt-[21px] h-[43px] rounded-[10px] bg-linear-to-r from-[#ff3c30] to-[#ff493c] pt-px text-[14.800px] text-white">加入不受信任的捷徑</button>
        <button className="mt-[15px] h-[22px] text-[14.700px] leading-[22px] text-[#1c7ff5]">不要加入</button>
      </div>
    </div>
  </Phone>
);

const blobs = [
  'left-[-20px] top-[60px] h-[150px] w-[50px] bg-[#1c5048]',
  'left-[30px] top-[88px] size-[60px] bg-[#2a7a3c]',
  'left-[95px] top-[85px] h-[60px] w-[130px] bg-[#5d5b66]',
  'left-[-20px] top-[125px] h-[100px] w-[90px] bg-[#3a6a5e]',
  'left-[270px] top-[60px] h-[160px] w-[70px] bg-[#3a3e4c]',
  'left-[90px] top-[230px] h-[70px] w-[60px] bg-[#505461]',
  'left-[170px] top-[235px] h-[50px] w-[60px] bg-[#235c8c]',
  'left-[25px] top-[300px] h-[62px] w-[64px] bg-[#736e76]',
  'left-[100px] top-[300px] h-[62px] w-[60px] bg-[#2b4a6d]',
  'left-[165px] top-[300px] h-[62px] w-[60px] bg-[#882e36]',
  'left-[245px] top-[300px] h-[62px] w-[60px] bg-[#40568c]',
  'left-[50px] top-[365px] h-[60px] w-[120px] bg-[#4b4556]',
  'left-[168px] top-[384px] h-[118px] w-[116px] bg-[#c2bebc]',
  'left-[285px] top-[400px] h-[90px] w-[60px] bg-[#5d6071]',
  'left-[-20px] top-[595px] h-[56px] w-[60px] bg-[#25415f]',
  'left-[22px] top-[592px] h-[62px] w-[64px] bg-[#386c9f]',
  'left-[101px] top-[592px] h-[66px] w-[54px] bg-[#bd5a64]',
  'left-[168px] top-[590px] h-[66px] w-[58px] bg-[#62a052]',
  'left-[240px] top-[590px] h-[66px] w-[66px] bg-[#81807e]',
  'left-[95px] top-[655px] h-[70px] w-[60px] bg-[#a27780]',
  'left-[170px] top-[655px] h-[70px] w-[60px] bg-[#636a45]',
  'left-[240px] top-[655px] h-[70px] w-[60px] bg-[#54576a]',
];

const Tile = ({ className, icon, label }: { className: string; icon: React.ReactNode; label: string }) => (
  <div className={`flex h-[56px] flex-col justify-between rounded-[9px] pt-[8px] pb-[5px] pl-[9px] ${className}`}>
    <div className="flex h-[18px] items-center">{icon}</div>
    <div className="pl-[1.500px] text-[11.200px] leading-[16px] font-semibold whitespace-nowrap">{label}</div>
  </div>
);

const WidgetPhone = () => (
  <Phone screen="bg-linear-to-b from-[#1e2640] via-[#383e56] via-40% to-[#232f4d]" home={false}>
    <div className="absolute inset-0 overflow-hidden">
      <div className="absolute top-[430px] left-[-20px] h-[150px] w-[200px] bg-[#040a22] blur-[28px]" />
      <div className="absolute top-[510px] left-[120px] h-[60px] w-[220px] bg-[#20263c] blur-[22px]" />
      {blobs.map((b, i) => <div key={i} className={`absolute rounded-[16px] blur-[20px] ${b}`} />)}
    </div>
    <div className="relative flex flex-1 flex-col text-white">
      <StatusBar time="2:01" level={9} />
      <div className="mt-[10px] ml-[20px] flex h-[41px] w-[284px] items-center justify-center gap-[9px] rounded-[12px] bg-[#a3a5b0]/45 text-[17px] text-[#bfc1cc]">
        <SearchIcon className="size-[17px]" /><span className="pt-px">搜尋</span>
      </div>
      <div className="mt-[28px] ml-[20px] grid h-[133px] w-[284px] grid-cols-2 content-start gap-x-[7px] gap-y-[7px] rounded-[16px] bg-[#d0cbd8]/65 p-[7px]">
        <Tile className="bg-[#06b0fb]" label="Tips" icon={
          <span className="flex size-[17px] items-center justify-center rounded-full bg-white text-[11px] leading-none font-bold text-[#06a7f8]">$</span>
        } />
        <Tile className="bg-[#06c9dc]" label="Google 以圖搜圖" icon={<SearchIcon className="size-[18px]" w={1.800} />} />
        <Tile className="bg-[#998b86]" label="Delete Last Photo" icon={
          <svg viewBox="0 0 18 18" className="size-[17px]" fill="none" stroke="#fff" strokeWidth="1.500" strokeLinecap="round"><path d="M9 1v3.500M9 14v3M1 9h3.500M14 9h3M3.300 3.300l2.200 2.200M14.700 3.300l-2.200 2.200M3.300 14.700l2.200-2.200" /><path d="m9 9 7.500 7.500" strokeWidth="2" /></svg>
        } />
        <Tile className="bg-[#998b86]" label="清除剪貼簿" icon={<Trash className="h-[18px] w-[16px]" />} />
      </div>
      <button className="mt-[26px] ml-[136px] h-[23px] w-[52px] rounded-full bg-[#a1a4bd] text-[13px] font-medium text-[#424867]">編輯</button>
    </div>
    <div className="absolute top-[182px] left-[162px] h-[71px] w-[145px] border-4 border-[#fb2b09]" />
  </Phone>
);

export default function App() {
  return (
    <main lang="zh-Hant" className="flex h-[1535px] w-[1323px] flex-col overflow-hidden bg-white pt-[13px] font-['Inter','Noto_Sans_CJK_TC',sans-serif] text-black">
      <div className="flex gap-[100.500px] pl-[16px]">
        <SafariPhone />
        <LibraryPhone />
        <div className="pt-px"><SettingsPhone /></div>
      </div>
      <div className="mt-[41px] flex gap-[101.500px] pl-[246px]">
        <AddPhone />
        <WidgetPhone />
      </div>
    </main>
  );
}
